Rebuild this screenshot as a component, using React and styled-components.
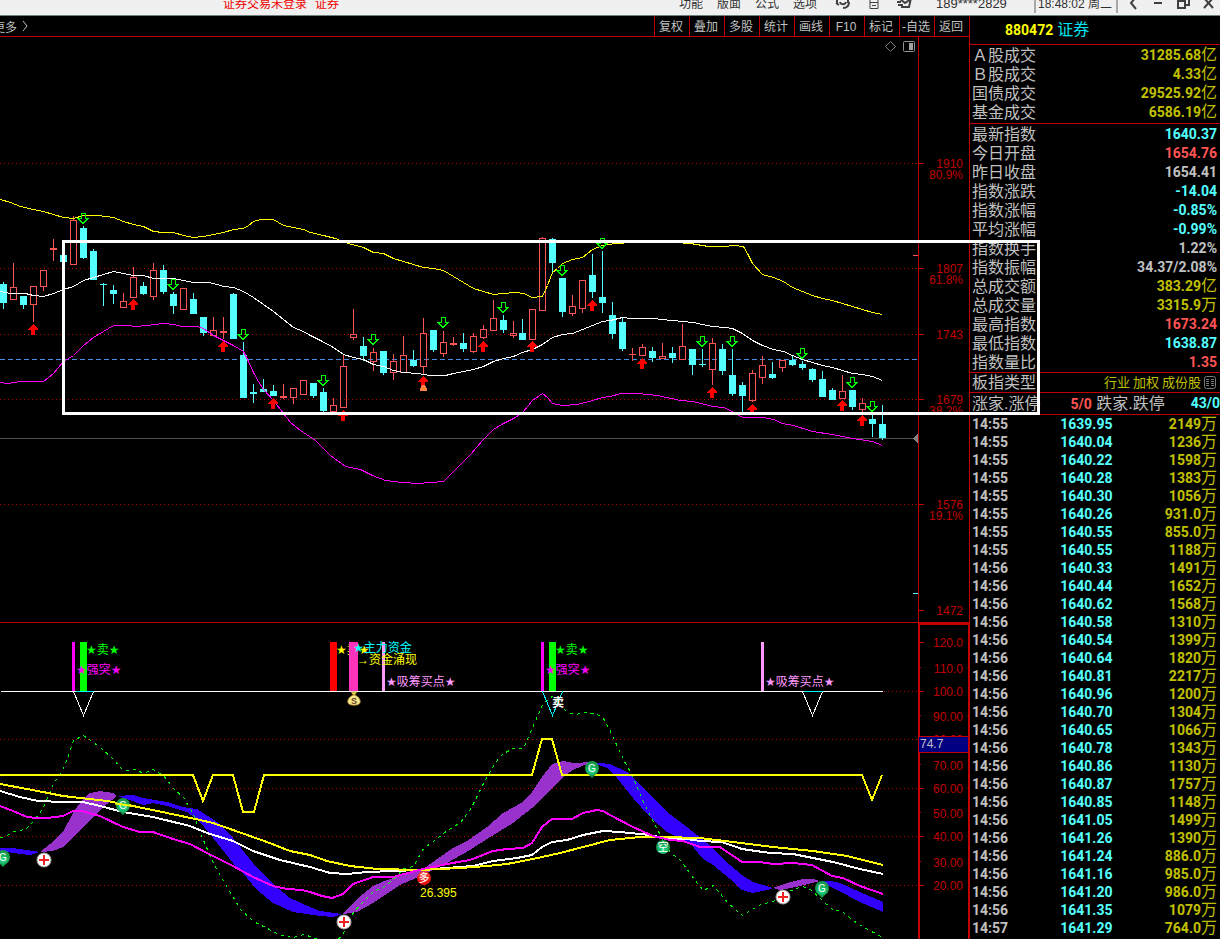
import React from "react";
import styled, { createGlobalStyle } from "styled-components";

const c = {
  line: "#c00000",
  grey: "#c0c0c0",
  cyan: "#54ffff",
  coral: "#ff5454",
  gold: "#c0c000",
};

const latin = '"Liberation Sans", "DejaVu Sans", "Noto Sans CJK SC", sans-serif';
const digits = 'Roboto, "Noto Sans CJK SC", sans-serif';

const GlobalStyle = createGlobalStyle`
  * { box-sizing: border-box; }
  body { margin: 0; background: #000; color: ${c.grey}; font-family: ${latin}; font-size: 12px; }
  button { font: inherit; color: inherit; background: none; border: 0; padding: 0; cursor: pointer; }
  table { border-collapse: collapse; border-spacing: 0; }
  a { color: inherit; text-decoration: none; }
`;

const Page = styled.div`
  position: relative;
  min-height: 100vh;
  overflow: hidden;
  display: flex;
  flex-direction: column;
`;

const TopBar = styled.header`
  height: 16px;
  flex: none;
  display: flex;
  align-items: flex-end;
  padding-bottom: 2px;
  overflow: hidden;
  background: #f0f0f0;
  border-bottom: 1px solid #70807c;
  color: #303030;
  line-height: 18px;
`;

const LoginNote = styled.div`
  flex: 1;
  padding-left: 223px;
  display: flex;
  gap: 8px;
  color: #f00000;
  white-space: nowrap;
`;

const MenuButton = styled.button`
  width: 38px;
  line-height: 18px;
`;

const BarIcons = styled.div`
  display: flex;
  padding: 0 16px 0 3px;
`;

const IconButton = styled.button`
  width: ${(p) => p.$w}px;
  height: 18px;
  display: flex;
  align-items: center;
  justify-content: center;
`;

const Account = styled.div`
  width: 98px;
  font-size: 13px;
`;

const Clock = styled.time`
  width: 84px;
  margin-right: 2px;
  padding-left: 2px;
  border: solid #a8a8a8;
  border-width: 0 2px;
  white-space: nowrap;
`;

const Body = styled.div`
  display: flex;
  flex: 1;
`;

const ChartColumn = styled.main`
  flex: 1;
  min-width: 0;
`;

const Toolbar = styled.nav`
  height: 21px;
  display: flex;
  justify-content: space-between;
  border-bottom: 1px solid ${c.line};
  overflow: hidden;
`;

const MoreButton = styled.button`
  text-indent: -7px;
  display: flex;
  align-items: center;
  gap: 5px;
`;

const ToolGroup = styled.div`
  display: flex;
`;

const ToolButton = styled.button`
  width: 35px;
  line-height: 22px;
  padding-right: 2px;
  text-align: center;
  white-space: nowrap;
  border-left: 1px solid ${c.line};
`;

const Chart = styled.svg`
  display: block;
  width: 100%;
  height: auto;
  font-family: ${latin};
  font-size: 12px;
`;

const Side = styled.aside`
  width: 251px;
  flex: none;
  border-left: 1px solid ${c.line};
  font-size: 16px;
`;

const SideTitle = styled.h1`
  height: 29px;
  margin: 0;
  padding-left: 35px;
  display: flex;
  align-items: center;
  gap: 4px;
  border-bottom: 1px solid ${c.line};
  font: 700 14px/28px ${digits};
  color: #ffff00;
`;

const StockName = styled.span`
  font-size: 16px;
  font-weight: 400;
  color: #00e4f0;
`;

const QuoteBox = styled.section`
  padding-top: 1px;
  padding-bottom: ${(p) => p.$bottom || 0}px;
  border-bottom: 1px solid ${c.line};
`;

const QuoteTable = styled.table`
  width: 100%;
`;

const QuoteLabel = styled.th`
  height: 19px;
  padding: 0 0 0 2px;
  font-weight: 400;
  line-height: 19px;
  text-align: left;
`;

const QuoteValue = styled.td`
  height: 19px;
  padding: 0 3px 0 0;
  font: 700 14px/19px ${digits};
  text-align: right;
  color: ${(p) => p.$color};
`;

const Unit = styled.span`
  font-size: 16px;
  font-weight: 400;
  line-height: 1px;
`;

const InfoRow = styled.div`
  height: ${(p) => p.$h}px;
  padding-left: 2px;
  display: flex;
  align-items: center;
  justify-content: space-between;
  border-bottom: 1px solid ${c.line};
  line-height: 19px;
  white-space: nowrap;
`;

const Tags = styled.div`
  display: flex;
  align-items: center;
  gap: 3px;
  padding-right: 4px;
  font-size: 13px;
  color: ${c.gold};
`;

const Falling = styled.span`
  margin: 0 26px 0 auto;
`;

const Count = styled.strong`
  font: 700 14px/19px ${digits};
  color: ${(p) => p.$color};
`;

const Tape = styled.table`
  width: 100%;
  table-layout: fixed;
`;

const TapeCell = styled.td`
  width: ${(p) => p.$w || "auto"};
  height: 18px;
  padding: 0 ${(p) => p.$right || 0}px 0 2px;
  font: 700 14px/18px ${digits};
  text-align: ${(p) => p.$align || "left"};
  color: ${(p) => p.$color};
`;

const Highlight = styled.div`
  position: absolute;
  left: 62px;
  right: 180px;
  top: 240px;
  height: 175px;
  border: 3px solid #fff;
  pointer-events: none;
`;

/* ---------- data ---------- */

const tools = ["复权", "叠加", "多股", "统计", "画线", "F10", "标记", "-自选", "返回"];

const turnover = [
  ["Ａ股成交", "31285.68", c.gold, "亿"],
  ["Ｂ股成交", "4.33", c.gold, "亿"],
  ["国债成交", "29525.92", c.gold, "亿"],
  ["基金成交", "6586.19", c.gold, "亿"],
];

const indexQuotes = [
  ["最新指数", "1640.37", c.cyan],
  ["今日开盘", "1654.76", c.coral],
  ["昨日收盘", "1654.41", c.grey],
  ["指数涨跌", "-14.04", c.cyan],
  ["指数涨幅", "-0.85%", c.cyan],
  ["平均涨幅", "-0.99%", c.cyan],
  ["指数换手", "1.22%", c.grey],
  ["指数振幅", "34.37/2.08%", c.grey],
  ["总成交额", "383.29", c.gold, "亿"],
  ["总成交量", "3315.9", c.gold, "万"],
  ["最高指数", "1673.24", c.coral],
  ["最低指数", "1638.87", c.cyan],
  ["指数量比", "1.35", c.coral],
];

const tape = [
  ["14:55", "1639.95", "2149"], ["14:55", "1640.04", "1236"], ["14:55", "1640.22", "1598"],
  ["14:55", "1640.28", "1383"], ["14:55", "1640.30", "1056"], ["14:55", "1640.26", "931.0"],
  ["14:55", "1640.55", "855.0"], ["14:55", "1640.55", "1188"], ["14:56", "1640.33", "1491"],
  ["14:56", "1640.44", "1652"], ["14:56", "1640.62", "1568"], ["14:56", "1640.58", "1310"],
  ["14:56", "1640.54", "1399"], ["14:56", "1640.64", "1820"], ["14:56", "1640.81", "2217"],
  ["14:56", "1640.96", "1200"], ["14:56", "1640.70", "1304"], ["14:56", "1640.65", "1066"],
  ["14:56", "1640.78", "1343"], ["14:56", "1640.86", "1130"], ["14:56", "1640.87", "1757"],
  ["14:56", "1640.85", "1148"], ["14:56", "1641.05", "1499"], ["14:56", "1641.26", "1390"],
  ["14:56", "1641.24", "886.0"], ["14:56", "1641.16", "985.0"], ["14:56", "1641.20", "986.0"],
  ["14:56", "1641.35", "1079"], ["14:57", "1641.29", "764.0"],
];

// Each candle: direction, high, body top, body bottom, low.
const candles = `D 282 284 303 309|U 263 287 300 300|D 296 296 305 309|U 286 286 305 322|U 270 270 287 291|U 239 248 250 261
D 255 255 262 262|U 216 220 265 265|D 226 228 258 259|D 249 251 280 280|D 283 284 285 306|D 285 290 294 304
U 293 301 308 308|U 267 277 298 298|D 282 286 294 295|U 263 270 297 300|D 265 270 292 294|D 292 294 306 314
U 288 288 310 310|D 293 299 314 314|D 317 317 333 336|U 317 330 336 336|U 317 331 333 339|D 293 294 339 339
D 342 355 398 398|D 384 392 394 403|D 379 389 392 392|D 385 391 396 396|U 384 396 398 399|U 388 388 398 404
U 380 380 395 395|D 383 383 396 398|D 388 392 411 412|U 398 405 412 412|U 354 366 408 408|U 309 334 338 340
D 337 346 356 361|U 348 352 362 371|D 351 351 373 375|U 354 361 373 380|U 336 355 373 373|D 350 360 366 367
U 318 333 367 374|D 330 330 350 352|U 331 342 354 357|U 337 343 345 346|D 333 343 349 352|U 333 336 352 353
U 325 329 338 339|U 300 318 331 331|D 315 320 330 333|U 321 333 336 338|D 319 333 340 340|U 309 309 340 340
U 237 238 311 311|D 238 239 263 273|D 278 278 312 317|U 295 306 314 316|U 280 280 309 313|D 254 275 292 298
D 251 297 303 313|D 302 315 334 339|D 318 322 349 351|U 348 354 355 361|U 344 347 356 356|D 347 351 358 362
U 343 356 359 359|D 347 353 358 363|U 324 346 360 360|D 349 349 365 375|D 349 364 365 367|U 338 343 370 385
D 344 349 371 375|D 349 375 394 396|D 382 385 396 412|U 370 373 401 402|U 356 365 378 384|D 362 374 378 379
U 360 360 368 372|D 356 360 365 366|D 361 364 368 370|D 368 369 380 382|D 371 379 397 397|D 388 390 400 400
U 375 391 399 399|D 390 390 407 410|U 398 403 410 412|D 413 419 424 437|D 405 424 438 440`
  .split(/[|\n]/)
  .map((row, i) => {
    const [dir, ...v] = row.trim().split(" ");
    const [high, top, bottom, low] = v.map(Number);
    return { x: i < 52 ? 3 + 10 * i : 2 + 10 * i, up: dir === "U", high, top, bottom, low };
  });

const bands = {
  upper:
    "0,199 10,202 20,206 33,209 43,211 53,214 63,217 73,218 83,215 98,215 113,217 123,221 133,224 143,226 153,231 163,232 173,232 183,235 193,237 203,236 213,234 223,232 233,229 243,228 248,225 253,221 260,219 273,219 283,225 293,227 303,229 310,232 323,235 335,238 348,243 363,247 373,252 383,253 393,258 403,261 423,267 433,268 443,270 453,276 463,282 473,288 483,291 493,294 503,293 515,292 523,293 532,297 542,296 547,285 552,272 557,268 562,263 572,259 582,257 592,249 602,245 608,244 615,243 632,242 660,241 690,243 708,246 725,246 733,245 743,246 747,253 752,263 762,274 773,277 783,281 792,287 802,291 812,295 822,298 832,300 842,303 852,306 862,309 872,312 882,314",
  middle:
    "0,291 10,293 25,293 33,295 43,296 53,293 63,289 73,286 83,280 93,277 103,274 113,271 123,273 133,275 143,275 153,278 173,278 183,280 193,282 208,282 217,284 223,286 233,287 243,291 253,297 273,311 283,319 293,327 303,331 310,335 320,340 333,347 343,354 353,357 363,359 373,364 383,366 393,370 403,372 417,373 430,375 445,375 453,373 473,369 483,366 493,361 503,358 513,356 522,352 532,349 542,344 552,337 562,334 572,333 582,329 592,325 602,321 610,320 622,317 630,318 655,318 660,319 673,320 682,321 693,322 702,324 712,326 725,327 732,328 742,333 752,340 762,345 773,349 783,351 792,355 802,359 812,362 822,365 832,367 842,370 852,373 862,374 872,376 882,380",
  lower:
    "0,382 7,383 20,381 43,381 53,373 63,361 73,355 83,345 93,337 103,331 113,325 128,325 135,326 147,325 163,323 173,324 182,326 197,326 203,328 213,335 223,340 233,345 243,351 248,361 253,372 258,381 263,389 273,400 283,413 290,422 300,430 315,440 330,455 345,466 360,469 372,475 385,480 402,482 418,483 430,482 443,481 455,469 470,454 482,440 493,429 503,423 515,417 519,414 523,411 532,400 542,393 547,397 552,403 562,405 577,404 592,400 602,397 610,396 620,393 638,393 657,395 680,400 693,401 712,406 723,407 732,411 742,417 763,417 773,419 782,423 793,425 812,431 832,434 852,438 872,441 882,445",
};

const buyArrows = [
  [33, 324], [133, 299], [223, 341], [273, 398], [343, 410], [423, 376], [483, 341],
  [532, 341], [592, 300], [642, 358], [712, 387], [752, 404], [842, 400], [862, 415],
];
const sellArrows = [
  [83, 213], [173, 279], [243, 329], [323, 375], [373, 334], [443, 317], [503, 302],
  [562, 265], [602, 238], [702, 336], [732, 336], [802, 348], [852, 377], [872, 401],
];

const priceAxis = [
  [163, "1910", "80.9%"], [268, "1807", "61.8%"], [334, "1743"], [399, "1679", "38.2%"],
  [504, "1576", "19.1%"], [610, "1472"],
];

// Tick position, label, label baseline, major flag.
const signalAxis = [
  [642, "120.0", 647, 1], [667, "110.0", 673, 0], [691, "100.0", 696, 1], [715, "90.00", 721, 0],
  [739, "80.00", 744, 1], [764, "70.00", 770, 0], [788, "60.00", 793, 1], [812, "50.00", 818, 0],
  [836, "40.00", 841, 1], [861, "30.00", 867, 0], [885, "20.00", 890, 1],
];

const ribbons = [
  ["#3300ff", "0,848 13,848 40,852 30,855 20,854 0,851"],
  ["#9932cc", "40,852 50,844 63,832 73,813 82,800 90,793 100,791 113,793 117,796 107,804 97,813 80,830 70,841 63,847 53,851"],
  ["#3300ff", "117,796 133,795 143,798 167,802 182,807 197,809 217,822 233,838 253,863 273,884 290,898 310,907 320,911 342,914 333,917 320,916 293,912 273,903 257,890 247,878 233,863 217,843 200,822 187,812 167,806 153,803 143,805 130,800"],
  ["#9932cc", "343,914 353,903 363,894 373,886 387,880 410,873 423,869 440,857 453,848 467,841 487,827 503,813 523,802 532,792 542,777 552,764 563,761 573,763 592,762 587,764 573,770 563,777 552,788 532,808 513,823 487,839 470,850 447,863 423,875 400,885 373,903 357,912"],
  ["#3300ff", "592,763 600,763 610,764 627,772 643,788 667,812 687,827 707,843 730,865 742,875 753,882 773,888 767,890 753,893 742,890 730,879 713,865 702,858 690,843 667,832 650,817 633,798 617,778 607,768"],
  ["#9932cc", "773,888 787,883 803,879 813,879 820,881 800,886 780,890"],
  ["#3300ff", "820,881 830,881 840,883 860,892 883,902 883,912 860,902 837,890 827,885"],
];

const averages = [
  ["#ffffff", "0,791 20,797 38,801 63,802 83,802 100,806 123,812 153,817 190,826 207,833 233,841 253,851 280,860 310,867 330,873 347,874 367,872 420,870 473,866 493,861 517,858 532,855 542,847 552,842 567,840 583,835 603,831 620,832 650,835 663,838 687,839 700,841 722,842 742,849 770,853 793,854 813,858 833,862 860,869 883,874"],
  ["#ffff00", "0,784 43,792 63,796 107,801 133,806 167,813 200,820 213,823 233,830 267,842 290,851 310,855 327,861 350,866 377,869 420,870 460,868 487,866 507,864 533,859 560,853 587,846 610,840 620,839 640,837 663,837 700,838 733,842 773,847 813,851 847,856 883,865"],
  ["#ff00ff", "0,806 13,811 27,817 37,818 47,818 63,816 73,811 82,811 100,816 123,827 140,832 153,832 173,839 190,844 207,853 233,866 253,877 273,886 287,889 302,890 310,892 322,896 332,898 343,894 353,884 373,877 393,877 423,869 447,864 470,860 493,851 507,849 523,848 532,843 542,827 552,819 572,819 583,813 597,810 603,811 610,815 633,827 653,836 670,840 683,841 700,847 720,847 742,862 760,862 773,864 793,863 812,865 832,876 843,878 860,886 883,894"],
];

const levelLine =
  "0,775 193,775 203,801 213,775 233,775 243,812 254,812 264,775 532,775 542,739 552,739 562,775 862,775 872,800 882,775";

const momentum =
  "0,837 5,836 13,831 25,829 33,821 43,807 53,783 63,768 68,755 73,740 83,735 100,747 113,759 123,770 135,769 143,773 153,769 163,775 173,788 183,797 193,814 200,833 213,863 227,887 240,909 253,921 267,928 280,935 293,937 303,934 313,937 330,945 342,935 353,912 363,901 373,891 383,887 397,875 403,868 413,866 423,848 433,841 447,830 460,822 470,809 483,783 495,762 503,753 513,748 523,748 533,725 542,704 553,695 560,705 567,712 575,714 587,712 597,714 603,718 610,731 615,742 625,763 632,775 643,802 660,835 670,852 680,860 697,883 703,890 713,885 727,902 742,915 760,904 773,901 783,893 802,886 810,889 823,901 833,910 840,910 857,923 873,932 882,937";

/* ---------- drawing parts ---------- */

const Dotted = ({ y, to = 918, from = 0 }) => (
  <line x1={from} x2={to} y1={y + 0.5} y2={y + 0.5} stroke={c.line} strokeDasharray="1 3" />
);

const Candle = ({ x, up, high, top, bottom, low }) => {
  const color = up ? c.coral : c.cyan;
  return (
    <g fill={color}>
      <rect x={x} y={high} width="1" height={top - high} />
      <rect x={x} y={bottom} width="1" height={low - bottom} />
      {up && bottom - top > 2 ? (
        <rect x={x - 2.5} y={top + 0.5} width="6" height={bottom - top - 1} fill="none" stroke={color} />
      ) : (
        <rect x={x - 3} y={top} width="7" height={bottom - top} />
      )}
    </g>
  );
};

const AxisText = ({ y, children }) => (
  <text x="963" y={y} textAnchor="end" fill={c.line}>{children}</text>
);

const Pin = ({ x, y, text }) => (
  <g transform={`translate(${x} ${y})`}>
    <path d="M-6 4 L0 10 L6 4Z" fill="#169a4b" />
    <circle r="7" fill="url(#greenBall)" />
    <text y="4" textAnchor="middle" fill="#fff" fontSize="10">{text}</text>
  </g>
);

const Cross = ({ x, y }) => (
  <g transform={`translate(${x} ${y})`}>
    <circle r="7" fill="#fff" stroke="#a8a0a0" strokeWidth="1" />
    <path d="M-5 0H5M0 -5V5" stroke="#f02020" strokeWidth="2" />
  </g>
);

const MoneyBag = () => (
  <g transform="translate(354 699)">
    <path d="M-3 -7H3L1 -4H-1Z" fill="#f0d840" stroke="#8a6a20" strokeWidth=".6" />
    <path d="M-1 -4H1C5 -2 7 1 6 4C5 7 -5 7 -6 4C-7 1 -5 -2 -1 -4Z" fill="#f6e98c" stroke="#a07828" strokeWidth=".8" />
    <text y="5" textAnchor="middle" fontSize="9" fontWeight="700" fill="#6a4028">S</text>
  </g>
);

const PriceChart = () => (
  <Chart viewBox="0 37 969 585" role="img" aria-label="K线图">
    <g shapeRendering="crispEdges">
      {priceAxis.slice(0, 5).map(([y]) => <Dotted key={y} y={y} />)}
      <line x1="0" x2="918" y1="359.5" y2="359.5" stroke="#4090e8" strokeDasharray="5 3" />
      <line x1="0" x2="918" y1="438.5" y2="438.5" stroke="#505050" />
      <path d="M913 438.5L918 434V443Z" fill="#808080" />
      {candles.map((k) => <Candle key={k.x} {...k} />)}
      <g transform="translate(.5 .5)" fill="none">
        <polyline points={bands.upper} stroke="#ffff00" />
        <polyline points={bands.middle} stroke="#ffffff" />
        <polyline points={bands.lower} stroke="#ff00ff" />
      </g>
      {buyArrows.map(([x, y]) => (
        <path key={x} transform={`translate(${x} ${y})`} d="M0 0L5 5V6H2V11H-2V6H-5V5Z" fill="#ff0000" />
      ))}
      {sellArrows.map(([x, y]) => (
        <path key={x} transform={`translate(${x} ${y})`} d="M-2 .5H2V5.5H5L0 10.5L-5 5.5H-2Z" fill="none" stroke="#00ff00" />
      ))}
      <path d="M422 385H425L427 389V391H420V389Z" fill="#ff8040" />
      <path d="M918.5 37V622" stroke={c.line} />
      <path d="M913 255.5H918" stroke={c.coral} />
      <path d="M913 593.5H918" stroke={c.cyan} />
      {priceAxis.map(([y]) => <path key={y} d={`M918 ${y + 0.5}H924`} stroke={c.line} />)}
    </g>
    {priceAxis.map(([y, price, ratio]) => (
      <g key={y}>
        <AxisText y={y + 5}>{price}</AxisText>
        {ratio && <AxisText y={y + 16}>{ratio}</AxisText>}
      </g>
    ))}
    <path d="M885.5 46.5L890.5 41.5L895.5 46.5L890.5 51.5Z" fill="none" stroke="#808080" />
    <rect x="903.5" y="41.5" width="11" height="10" rx="1" fill="none" stroke="#909090" />
    <rect x="909" y="43" width="4" height="7" fill="#a0a0a0" />
  </Chart>
);

const SignalChart = () => (
  <Chart viewBox="0 622 969 317" role="img" aria-label="指标图">
    <defs>
      <radialGradient id="greenBall" cy=".7">
        <stop offset="0" stopColor="#20e090" />
        <stop offset="1" stopColor="#169a4b" />
      </radialGradient>
      <radialGradient id="redBall" cy=".3">
        <stop offset="0" stopColor="#ff7060" />
        <stop offset="1" stopColor="#e81010" />
      </radialGradient>
    </defs>
    <g shapeRendering="crispEdges">
      {[739, 788, 836, 885].map((y) => <Dotted key={y} y={y} />)}
      <Dotted y={691} from={884} />
      <rect x="72" y="642" width="3" height="49" fill="#ff00ff" />
      <rect x="80" y="642" width="7" height="49" fill="#00ff00" />
      <rect x="330" y="642" width="7" height="49" fill="#ff0000" />
      <rect x="382" y="642" width="3" height="49" fill="#ff99ff" />
      <rect x="541" y="642" width="3" height="49" fill="#ff00ff" />
      <rect x="549" y="642" width="7" height="49" fill="#00ff00" />
      <rect x="761" y="642" width="3" height="49" fill="#ff99ff" />
      {ribbons.map(([fill, points]) => <polygon key={points} points={points} fill={fill} />)}
      <g transform="translate(.5 .5)" fill="none">
        <polyline points={momentum} stroke="#00ff00" strokeDasharray="3 4" />
        <path d="M0 691H882M73 691L83 715L93 691M802 691L812 715L822 691" stroke="#fff" />
        <path d="M75 691H93M803 691H822M542 691L552 715L562 691" stroke="#00ffff" />
      </g>
      <g fill="none" strokeWidth="2">
        {averages.map(([stroke, points]) => <polyline key={stroke} points={points} stroke={stroke} />)}
        <polyline points={levelLine} stroke="#ffff00" />
      </g>
    </g>

    <text x="86" y="654" fill="#00ff00">★卖★</text>
    <text x="76" y="674" fill="#ff00ff">★强突★</text>
    <text x="336" y="654" fill="#ffff00">★卖★</text>
    <rect x="349" y="642" width="9" height="49" fill="#ff33bb" />
    <text x="353" y="652" fill="#00ffff">★主力资金</text>
    <text x="357" y="664" fill="#ffff00">→</text>
    <text x="369" y="664" fill="#ffff00">资金涌现</text>
    <text x="386" y="686" fill="#ff99ff">★吸筹买点★</text>
    <text x="555" y="654" fill="#00ff00">★卖★</text>
    <text x="545" y="674" fill="#ff00ff">★强突★</text>
    <text x="765" y="686" fill="#ff99ff">★吸筹买点★</text>
    <text x="552" y="707" fill="#ffffff" fontWeight="700">卖</text>
    <text x="420" y="897" fill="#ffff00">26.395</text>

    <MoneyBag />
    <Pin x={3} y={857} text="G" />
    <Pin x={123} y={805} text="G" />
    <path d="M115 803.5L133 806" stroke="#ffff00" strokeWidth="2" />
    <Pin x={592} y={768} text="G" />
    <Pin x={822} y={888} text="G" />
    <Cross x={44} y={860} />
    <Cross x={344} y={922} />
    <Cross x={783} y={897} />
    <g transform="translate(663 847)">
      <circle r="7" fill="url(#greenBall)" />
      <text y="4" textAnchor="middle" fill="#fff" fontSize="11">空</text>
    </g>
    <g transform="translate(424 878)">
      <circle r="7" fill="url(#redBall)" />
      <text y="4" textAnchor="middle" fill="#fff" fontSize="11">多</text>
    </g>

    <g shapeRendering="crispEdges">
      <path d="M0 622.5H969" stroke={c.line} />
      <path d="M919 939V624H969V939" fill="none" stroke="#c80000" strokeWidth="2" />
      {signalAxis.map(([y, , , major]) => (
        <path key={y} d={`M920 ${y + 0.5}H${major ? 924 : 921}`} stroke={c.line} />
      ))}
    </g>
    {signalAxis.map(([y, label, base]) => <AxisText key={y} y={base}>{label}</AxisText>)}
    <rect x="919" y="737" width="49" height="15" fill="#000080" />
    <path d="M919 736.5H968M919 752.5H968" stroke={c.line} />
    <text x="920" y="748" fill={c.grey}>74.7</text>
  </Chart>
);

/* ---------- side panel parts ---------- */

const Quotes = ({ rows, bottom }) => (
  <QuoteBox $bottom={bottom}>
    <QuoteTable>
      <tbody>
        {rows.map(([label, value, color, unit]) => (
          <tr key={label}>
            <QuoteLabel scope="row">{label}</QuoteLabel>
            <QuoteValue $color={color}>{value}{unit && <Unit>{unit}</Unit>}</QuoteValue>
          </tr>
        ))}
      </tbody>
    </QuoteTable>
  </QuoteBox>
);

const Glyph = ({ w, d, stroke = 1 }) => (
  <svg width={w} height="14" viewBox={`0 0 ${w} 14`} fill="none" stroke="#404040" strokeWidth={stroke}>
    <path d={d} />
  </svg>
);

export default function App() {
  return (
    <Page>
      <GlobalStyle />
      <TopBar>
        <LoginNote><span>证券交易未登录</span><span>证券</span></LoginNote>
        {["功能", "版面", "公式", "选项"].map((m) => <MenuButton key={m}>{m}</MenuButton>)}
        <BarIcons>
          <IconButton $w={31} aria-label="客服">
            <Glyph w={16} stroke={2} d="M2 6V3M13 6V3M1 6L4 8M14 5C14 9 12 11 8 11M5 5C6 8 10 8 11 5" />
          </IconButton>
          <IconButton $w={31} aria-label="手机">
            <Glyph w={12} d="M2 1V11.5H10V1M2 5.5H10M4 8.5H8" />
          </IconButton>
          <IconButton $w={31} aria-label="邮件">
            <Glyph w={18} stroke={2} d="M15 1L13 10H5M4 2L9 6L15 2M1 5H5M2 8H7" />
          </IconButton>
        </BarIcons>
        <Account>189****2829</Account>
        <Clock>18:48:02 周二</Clock>
        <IconButton $w={25} aria-label="后退"><Glyph w={14} stroke={2} d="M10 0L5 6L10 12" /></IconButton>
        <IconButton $w={25} aria-label="最小化"><Glyph w={14} stroke={2} d="M3 6H11" /></IconButton>
        <IconButton $w={25} aria-label="还原"><Glyph w={14} stroke={2} d="M2 4H9V11H2ZM5 4V1H13V8H9" /></IconButton>
        <IconButton $w={25} aria-label="关闭"><Glyph w={14} stroke={2} d="M3 1L12 11M12 1L3 11" /></IconButton>
      </TopBar>

      <Body>
        <ChartColumn>
          <Toolbar>
            <MoreButton>
              更多
              <svg width="6" height="10" viewBox="0 0 6 10" fill="none" stroke={c.grey}>
                <path d="M1 0L5 5L1 10" />
              </svg>
            </MoreButton>
            <ToolGroup>
              {tools.map((t) => <ToolButton key={t}>{t}</ToolButton>)}
            </ToolGroup>
          </Toolbar>
          <PriceChart />
          <SignalChart />
        </ChartColumn>

        <Side>
          <SideTitle>880472<StockName>证券</StockName></SideTitle>
          <Quotes rows={turnover} bottom={1} />
          <Quotes rows={indexQuotes} />
          <InfoRow $h={20}>
            板指类型
            <Tags>
              <a href="#industry">行业</a>
              <a href="#weighted">加权</a>
              <a href="#members">成份股</a>
              <svg width="12" height="13" viewBox="0 0 12 13" fill="none" stroke="#787878">
                <rect x=".5" y=".5" width="11" height="12" rx="2" />
                <path d="M2 3.5H5M2 5.5H5M2 7.5H5M2 9.5H5M7 3.5H10M7 5.5H10M7 7.5H10M7 9.5H10" />
              </svg>
            </Tags>
          </InfoRow>
          <InfoRow $h={22}>
            <span>涨家.涨停</span>
            <Falling><Count $color={c.coral}>5/0</Count> 跌家.跌停</Falling>
            <Count $color={c.cyan}>43/0</Count>
          </InfoRow>
          <Tape>
            <tbody>
              {tape.map(([time, price, volume]) => (
                <tr key={price + volume}>
                  <TapeCell $w="20%" $color={c.grey}>{time}</TapeCell>
                  <TapeCell $w="37%" $align="right" $color={c.cyan}>{price}</TapeCell>
                  <TapeCell $align="right" $right={3} $color={c.gold}>{volume}<Unit>万</Unit></TapeCell>
                </tr>
              ))}
            </tbody>
          </Tape>
        </Side>
      </Body>
      <Highlight />
    </Page>
  );
}
